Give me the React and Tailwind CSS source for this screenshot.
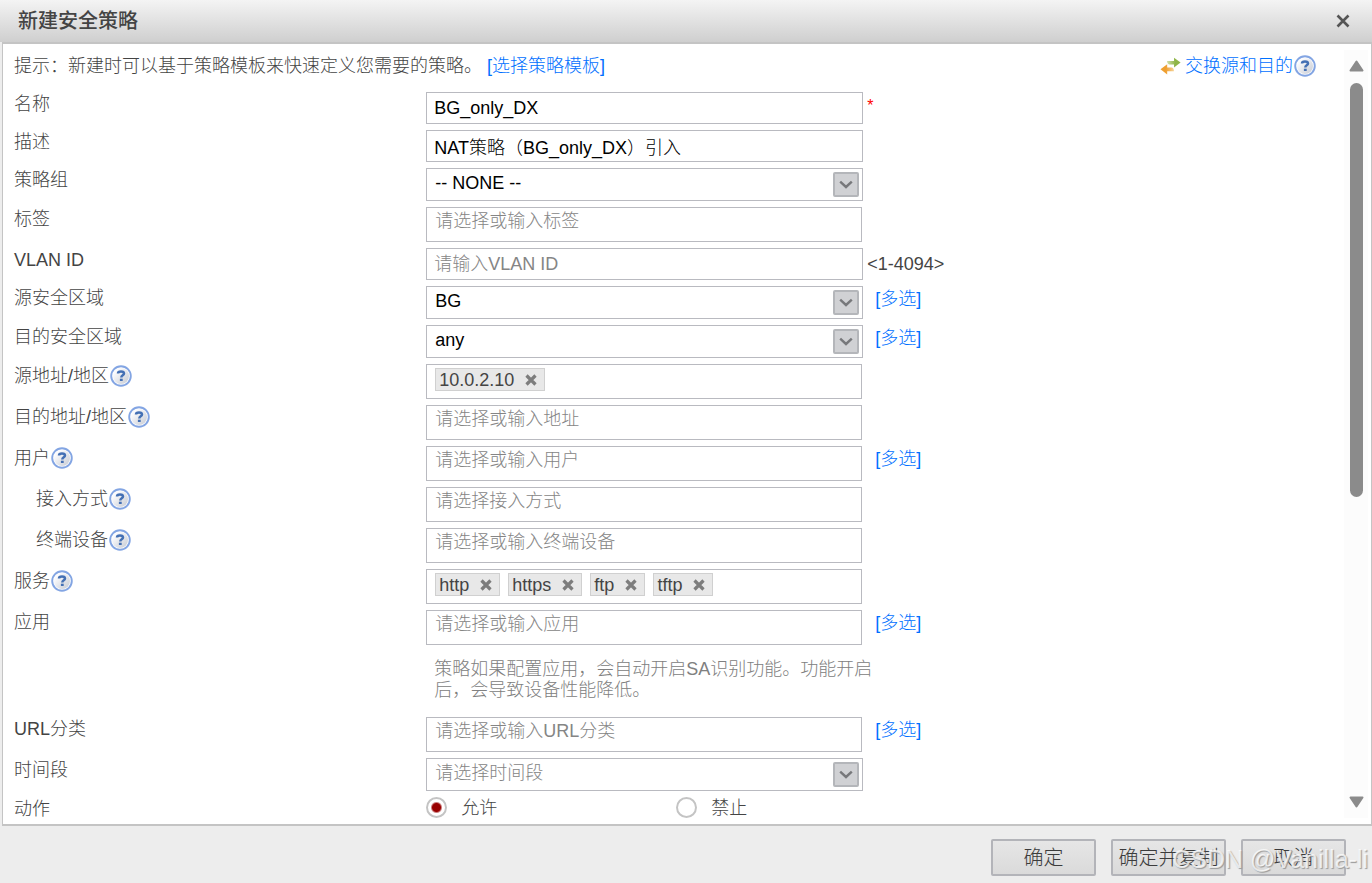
import React, {useState} from 'react';

const linkClass = 'text-[#0070ff] hover:underline';

function HelpIcon(){
  return (
    <svg width="22" height="22" viewBox="0 0 22 22" aria-hidden="true">
      <defs>
        <linearGradient id="helpFill" x1="0" y1="0" x2="1" y2="1">
          <stop offset="0.2" stopColor="#fbfbfd" />
          <stop offset="1" stopColor="#c6cad2" />
        </linearGradient>
      </defs>
      <circle cx="11" cy="11" r="9.800" fill="#fff" stroke="#83a5e3" strokeWidth="1.900" />
      <circle cx="11" cy="11" r="8" fill="url(#helpFill)" />
      <path d="M8 8.500C8 7 9.200 6.500 11 6.500s3 .7 3 2.100c0 1.700-2.700 1.700-2.700 3.800" fill="none" stroke="#4470b4" strokeWidth="2.500" />
      <rect x="9.900" y="13.700" width="2.800" height="2.300" fill="#4470b4" />
    </svg>
  );
}

function SwapIcon(){
  return (
    <svg width="21" height="18" viewBox="0 0 21 18" aria-hidden="true">
      <defs>
        <linearGradient id="swapGreen" x1="0" y1="0" x2="1" y2="0">
          <stop offset="0" stopColor="#d3dfae" />
          <stop offset="0.6" stopColor="#8fb548" />
        </linearGradient>
        <linearGradient id="swapOrange" x1="1" y1="0" x2="0" y2="0">
          <stop offset="0" stopColor="#f6d59c" />
          <stop offset="0.6" stopColor="#ef9f30" />
        </linearGradient>
      </defs>
      <path d="M7 4h7V.8L20.600 5.500 14 10.500V7.500H9.500C8.300 7.500 7 6.300 7 4z" fill="url(#swapGreen)" />
      <path d="M14 14.300H7.200V17.400L.5 12.200 7.200 7.300v3.200h4.300c1.500 0 2.500 1.500 2.500 3.800z" fill="url(#swapOrange)" />
    </svg>
  );
}

function Row({label, htmlFor, help, indent, children}){
  return (
    <div className="flex items-start">
      <div className={`w-[31%] shrink-0 flex items-center h-6 leading-6 ${indent ? 'pl-[22px]' : ''}`}>
        <label htmlFor={htmlFor}>{label}</label>
        {help && <button type="button" aria-label={`${label}帮助`} className="ml-px"><HelpIcon /></button>}
      </div>
      {children}
    </div>
  );
}

function MultiLink(){
  return <a href="#multi" className={`ml-3 leading-[26px] ${linkClass}`}>[多选]</a>;
}

function TextField({id, value, placeholder}){
  return (
    <input
      id={id}
      type="text"
      defaultValue={value}
      placeholder={placeholder}
      className="w-[437px] h-8 border border-[#b9bac0] bg-white px-[7px] text-black placeholder:text-[#858585] placeholder:opacity-100 outline-none"
    />
  );
}

function SelectField({id, options, muted}){
  return (
    <div className="relative w-[437px]">
      <select id={id} className={`block w-full h-[33px] appearance-none border border-[#b9bac0] bg-white pl-2 pr-9 pb-1 outline-none ${muted ? 'text-[#858585]' : 'text-black'}`}>
        {options.map(o => <option key={o}>{o}</option>)}
      </select>
      <span className="pointer-events-none absolute right-1 top-1 w-[26px] h-[25px] flex items-center justify-center border-2 border-[#b4b6ba] bg-[#d0d1d4] rounded-xs">
        <svg width="14" height="9" viewBox="0 0 14 9" aria-hidden="true">
          <path d="M1.200 1.700 7 7l5.800-5.300" fill="none" stroke="#77787b" strokeWidth="2.400" />
        </svg>
      </span>
    </div>
  );
}

function TagField({id, placeholder, initial = []}){
  const [tags, setTags] = useState(initial);

  return (
    <div className="w-[437px] shrink-0">
      <div className="w-[436px] h-[35px] flex items-start gap-2 border border-[#b9bac0] bg-white px-2 pt-[3px]">
        {tags.map(t => (
          <span key={t} className="h-[23px] flex items-center gap-[11px] border border-[#d0d0d0] bg-[#e8e8e8] pl-[3px] pr-[7px] leading-5">
            {t}
            <button type="button" aria-label={`删除 ${t}`} onClick={()=>setTags(tags.filter(x => x !== t))}>
              <svg width="12" height="12" viewBox="0 0 12 12" aria-hidden="true">
                <path d="M1.500 1.500l9 9M10.500 1.500l-9 9" stroke="#7d7d7d" strokeWidth="3.200" />
              </svg>
            </button>
          </span>
        ))}
        <input id={id} type="text" placeholder={tags.length ? '' : placeholder} className="flex-1 min-w-0 h-5 placeholder:text-[#858585] placeholder:opacity-100 outline-none" />
      </div>
    </div>
  );
}

function Radio({label, checked, onChange}){
  return (
    <label className="w-[250px] flex items-center">
      <input
        type="radio"
        name="action"
        checked={checked}
        onChange={onChange}
        className="appearance-none w-[21px] h-[21px] rounded-full border-2 border-[#c4c4c4] bg-white checked:bg-[radial-gradient(circle,#990000_4px,#ffffff_6px)]"
      />
      <span className="ml-[14px] leading-5">{label}</span>
    </label>
  );
}

function FooterButton({children, wide}){
  return (
    <button type="button" className={`${wide ? 'w-[115px]' : 'w-[105px]'} h-[37px] rounded-xs border-2 border-[#b3b4b9] bg-linear-to-b from-[#e6e6e6] to-[#dadada] text-xl leading-6 text-[#3c3c3c] whitespace-nowrap`}>
      {children}
    </button>
  );
}

export default function App(){
  const [action, setAction] = useState('permit');

  return (
    <div className="relative h-screen flex flex-col bg-[#ededed] font-['Liberation_Sans','Noto_Sans_CJK_SC',sans-serif] text-lg text-[#444]">
      <header className="h-[42px] shrink-0 flex items-center justify-between pl-[18px] pr-[22px] bg-linear-to-b from-[#f4f4f4] to-[#cfcfcf]">
        <h1 className="text-xl leading-6 font-medium">新建安全策略</h1>
        <button type="button" aria-label="关闭">
          <svg width="14" height="14" viewBox="0 0 14 14" aria-hidden="true">
            <path d="M1.500 1.500l11 11M12.500 1.500l-11 11" stroke="#555" strokeWidth="2.600" />
          </svg>
        </button>
      </header>

      <main className="flex-1 min-h-0 ml-[2px] flex border-x border-y-2 border-[#c4c4c4] bg-white font-light">
        <form className="flex-1 min-w-0 pl-[11px] pt-[10px] overflow-hidden" onSubmit={e=>e.preventDefault()}>
          <div className="flex justify-between items-center h-6 pr-7 mb-[14px]">
            <p>提示：新建时可以基于策略模板来快速定义您需要的策略。 <a href="#template" className={linkClass}>[选择策略模板]</a></p>
            <div className="flex items-center">
              <SwapIcon />
              <a href="#swap" className={`ml-1 ${linkClass}`}>交换源和目的</a>
              <button type="button" aria-label="交换源和目的帮助" className="ml-px"><HelpIcon /></button>
            </div>
          </div>

          <div className="flex flex-col gap-[6px]">
            <Row label="名称" htmlFor="name">
              <TextField id="name" value="BG_only_DX" />
              <span className="ml-1 leading-7 text-base text-[#ff0000]">*</span>
            </Row>
            <Row label="描述" htmlFor="desc">
              <TextField id="desc" value="NAT策略（BG_only_DX）引入" />
            </Row>
            <Row label="策略组" htmlFor="group">
              <SelectField id="group" options={['-- NONE --']} />
            </Row>
            <Row label="标签" htmlFor="tag">
              <TagField id="tag" placeholder="请选择或输入标签" />
            </Row>
            <Row label="VLAN ID" htmlFor="vlan">
              <TextField id="vlan" placeholder="请输入VLAN ID" />
              <span className="ml-1 leading-8">&lt;1-4094&gt;</span>
            </Row>
            <Row label="源安全区域" htmlFor="srcZone">
              <SelectField id="srcZone" options={['BG', 'any']} />
              <MultiLink />
            </Row>
            <Row label="目的安全区域" htmlFor="dstZone">
              <SelectField id="dstZone" options={['any', 'BG']} />
              <MultiLink />
            </Row>
            <Row label="源地址/地区" htmlFor="srcAddr" help>
              <TagField id="srcAddr" placeholder="请选择或输入地址" initial={['10.0.2.10']} />
            </Row>
            <Row label="目的地址/地区" htmlFor="dstAddr" help>
              <TagField id="dstAddr" placeholder="请选择或输入地址" />
            </Row>
            <Row label="用户" htmlFor="user" help>
              <TagField id="user" placeholder="请选择或输入用户" />
              <MultiLink />
            </Row>
            <Row label="接入方式" htmlFor="access" help indent>
              <TagField id="access" placeholder="请选择接入方式" />
            </Row>
            <Row label="终端设备" htmlFor="device" help indent>
              <TagField id="device" placeholder="请选择或输入终端设备" />
            </Row>
            <Row label="服务" htmlFor="service" help>
              <TagField id="service" placeholder="请选择或输入服务" initial={['http', 'https', 'ftp', 'tftp']} />
            </Row>
            <Row label="应用" htmlFor="app">
              <div className="w-[500px]">
                <div className="flex">
                  <TagField id="app" placeholder="请选择或输入应用" />
                  <MultiLink />
                </div>
                <p className="w-[450px] mt-[14px] mb-[10px] pl-2 leading-[21px] text-[#808080]">策略如果配置应用，会自动开启SA识别功能。功能开启后，会导致设备性能降低。</p>
              </div>
            </Row>
            <Row label="URL分类" htmlFor="url">
              <TagField id="url" placeholder="请选择或输入URL分类" />
              <MultiLink />
            </Row>
            <Row label="时间段" htmlFor="time">
              <SelectField id="time" options={['请选择时间段']} muted />
            </Row>
            <Row label="动作">
              <Radio label="允许" checked={action === 'permit'} onChange={()=>setAction('permit')} />
              <Radio label="禁止" checked={action === 'deny'} onChange={()=>setAction('deny')} />
            </Row>
          </div>
        </form>

        <div className="w-6 shrink-0 mr-[3px] my-[6px] flex flex-col items-center bg-[#fcfcfc] py-[10px]">
          <svg width="15" height="12" viewBox="0 0 15 12" aria-hidden="true">
            <path d="M7.500 1.500 13.500 10.500h-12z" fill="#8b8b8b" stroke="#8b8b8b" strokeWidth="2" strokeLinejoin="round" />
          </svg>
          <div className="flex-1 w-[13px] my-[11px]">
            <div className="h-[59%] rounded-full bg-[#8b8b8b]" />
          </div>
          <svg width="15" height="12" viewBox="0 0 15 12" aria-hidden="true">
            <path d="M7.500 10.500 1.500 1.500h12z" fill="#8b8b8b" stroke="#8b8b8b" strokeWidth="2" strokeLinejoin="round" />
          </svg>
        </div>
      </main>

      <footer className="h-[57px] shrink-0 flex items-start justify-end gap-[15px] pt-[13px] pr-[26px] font-light">
        <FooterButton>确定</FooterButton>
        <FooterButton wide>确定并复制</FooterButton>
        <FooterButton>取消</FooterButton>
      </footer>
      <span className="pointer-events-none absolute right-1 bottom-2 text-[25px] leading-8 text-white/75 [text-shadow:1px_1px_1px_#999]">CSDN @Vanilla-li</span>
    </div>
  );
}
